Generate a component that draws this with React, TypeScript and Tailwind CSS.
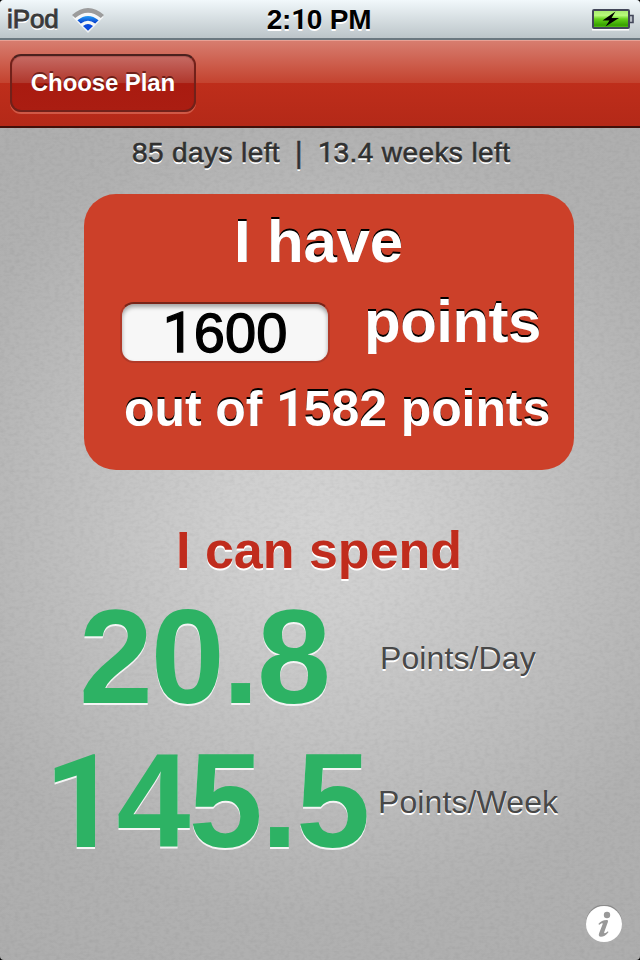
import React from "react";

// Straight-stemmed numeral one, set on the same advance as the other digits.
function One({ className = "" }: { className?: string }) {
  return <span className={`inline-block w-[0.556em] font-[Roboto,sans-serif] leading-none ${className}`}>1</span>;
}

function StatusBar() {
  return (
    <div className="flex h-10 items-center justify-between border-b-2 border-[#6b7880] bg-linear-to-b from-[#f1f8fb] to-[#bcc5c9] pl-[7px] pr-[6px]">
      <div className="flex w-[240px] items-center">
        <span className="w-[65px] text-[26px] leading-[38px] tracking-[-0.1px] text-[#393939] [-webkit-text-stroke:0.9px_#393939] [text-shadow:0_2px_0_#fff]">
          iPod
        </span>
        <svg width="32" height="25" viewBox="0 0 32 25" className="mt-[3px]">
          <defs>
            <linearGradient id="wifi" x1="0" y1="0" x2="0" y2="1">
              <stop offset="0" stopColor="#249cf5" />
              <stop offset="1" stopColor="#0737c8" />
            </linearGradient>
          </defs>
          <path d="M16 25 L0.5 9 Q16 -4 31.5 9 Z" fill="#fff" opacity="0.75" />
          <path d="M0 7 Q16 -7 32 7 L28.8 10 Q16 -0.5 3.2 10 Z" fill="#9c9c9c" />
          <path d="M5.4 12.3 Q16 3.6 26.6 12.3 L23.2 15.6 Q16 9.8 8.8 15.6 Z" fill="url(#wifi)" />
          <path d="M11 18 Q16 14 21 18 L16 22.8 Z" fill="#0a49db" />
        </svg>
      </div>
      <span className="mr-[3px] pt-px text-[28px] leading-[38px] font-bold tracking-[-0.2px] whitespace-nowrap text-black [text-shadow:0_2px_0_#fff]">
        2:<One />0 PM
      </span>
      <div className="flex w-[240px] justify-end">
        <svg width="43" height="22" viewBox="0 0 43 22" className="mt-0.5">
          <defs>
            <linearGradient id="cell" x1="0" y1="0" x2="0" y2="1">
              <stop offset="0" stopColor="#a5e96c" />
              <stop offset="0.3" stopColor="#b8fa7c" />
              <stop offset="0.5" stopColor="#65d21b" />
              <stop offset="0.85" stopColor="#36a000" />
              <stop offset="1" stopColor="#66cf25" />
            </linearGradient>
          </defs>
          <path d="M1 20.5H38" stroke="#fff" strokeWidth="2" />
          <rect x="2" y="1" width="36" height="18" rx="1" fill="url(#cell)" stroke="#424659" strokeWidth="2" />
          <path d="M39 6.5h3v7h-3" fill="#b7bdc5" stroke="#424659" strokeWidth="1.6" />
          <path d="M24.5 2.5 L11.5 11.5 H18.5 L14.5 17.5 L28 9 H20.5 Z" fill="#000" />
        </svg>
      </div>
    </div>
  );
}

function NavBar() {
  return (
    <div className="flex h-[88px] items-start border-t border-b-2 border-t-[#e8a195] border-b-[#42100a] bg-[linear-gradient(#d77d6f_0%,#c4432f_49%,#be2e1b_50%,#b42918_100%)] pt-[13px] pl-[10px]">
      <button className="h-[58px] w-[186px] rounded-[11px] border-2 border-[#71211a] border-t-[#4b211e] bg-[linear-gradient(#c66b64_0%,#b0372c_50%,#a91b10_51%,#aa1d12_100%)] pb-px text-[24px] leading-[52px] font-bold tracking-[-0.1px] whitespace-nowrap text-white shadow-[0_2px_0_rgba(225,120,100,0.6),inset_0_1px_1px_rgba(70,10,10,0.2)] [text-shadow:0_-2px_0_rgba(70,10,5,0.65)]">
        Choose Plan
      </button>
    </div>
  );
}

function BudgetCard() {
  return (
    <div className="mt-[18px] ml-[84px] h-[276px] w-[490px] rounded-[32px] bg-[#cc4029] pt-[18px] font-bold whitespace-nowrap text-white [text-shadow:0_-2px_0_#000]">
      <div className="pl-[150px] text-[60px] leading-[60px] tracking-[-0.2px]">I have</div>
      <div className="mt-5 flex h-[71px] items-start pl-[36px]">
        <div className="mt-[10px] h-[61px] w-[210px] rounded-[14px] border-2 border-[#b13a29] border-t-[#782418] bg-[#f7f7f7] text-center text-[56px] leading-[58px] font-normal text-black shadow-[inset_0_3px_4px_rgba(0,0,0,0.35)] [-webkit-text-stroke:1.3px_#000] [text-shadow:none]">
          <One />600
        </div>
        <div className="ml-[34px] text-[60px] leading-[60px] tracking-[-0.5px]">points</div>
      </div>
      <div className="mt-4 pl-[40px] text-[50px] leading-[60px] tracking-[-0.1px]">
        out of <One />582 points
      </div>
    </div>
  );
}

interface AmountProps {
  value: React.ReactNode;
  unit: string;
  valueClass: string;
  unitClass: string;
}

function Amount({ value, unit, valueClass, unitClass }: AmountProps) {
  return (
    <div className="flex h-36 items-center whitespace-nowrap">
      <div className={`shrink-0 text-[133px] leading-[142px] font-bold text-[#2db264] [text-shadow:0_2px_0_#f4f4f4] ${valueClass}`}>
        {value}
      </div>
      <div className={`pt-[2px] text-[32px] leading-[144px] tracking-[0.1px] text-[#484848] [text-shadow:0_2px_0_#fff] ${unitClass}`}>{unit}</div>
    </div>
  );
}

export default function App() {
  return (
    <div className="h-[960px] w-[640px] bg-black font-['Liberation_Sans',Arial,sans-serif]">
      <div className="relative h-full w-full overflow-hidden rounded-[4px] bg-[radial-gradient(circle_at_320px_520px,#d3d3d3_0px,#cfcfcf_90px,#bfbfbf_250px,#b1b1b1_400px,#acacac_600px)]">
        {/* Fine paper grain over the backdrop */}
        <svg className="absolute inset-0" width="640" height="960">
          <filter id="grain">
            <feTurbulence type="fractalNoise" baseFrequency="0.2 0.3" numOctaves="2" seed="4" />
            <feColorMatrix values="0 0 0 0 0  0 0 0 0 0  0 0 0 0 0  0.09 0 0 0 -0.035" />
          </filter>
          <rect width="640" height="960" filter="url(#grain)" />
        </svg>
        <div className="relative flex h-full flex-col">
          <StatusBar />
          <NavBar />
          <div className="flex h-12 items-center pt-px pl-[132px] text-[28px] tracking-[0.4px] whitespace-pre text-[#303030] [-webkit-text-stroke:0.6px_#303030] [text-shadow:0_2px_0_#fff]">
            <span className="w-[163px]">85 days left</span>
            <span className="w-[23px] text-[29px] leading-[44px]">|</span>
            <span>
              <One />3.4 weeks left
            </span>
          </div>
          <BudgetCard />
          <div className="mt-[50px] pl-[176px] text-[52px] leading-[60px] font-bold whitespace-nowrap text-[#c02c1d] [text-shadow:0_2px_0_#fff]">
            I can spend
          </div>
          <div className="mt-[5px]">
            <Amount value="20.8" unit="Points/Day" valueClass="w-[301px] pl-[79px] tracking-[-2.3px]" unitClass="pl-[79px]" />
            <Amount value={<><One className="text-[0.98em]" />45.5</>} unit="Points/Week" valueClass="w-[376px] pl-[44px] tracking-[-1.7px]" unitClass="pl-[2px]" />
          </div>
          <div className="mt-8 ml-[586px]">
            <svg width="36" height="37" viewBox="0 0 36 37">
              <circle cx="18" cy="17.5" r="18" fill="#8c8c8c" />
              <circle cx="18" cy="19" r="18" fill="#fff" />
              <circle cx="21" cy="10" r="3.2" fill="#999" />
              <path d="M12.5 18.8 C14.5 16.5 17.5 14.9 21 15 C22.2 15.1 22.2 16.2 21.8 17.3 L18.2 27.3 C17.8 28.8 19.5 28.4 22 26.2 L22.4 27.2 C20 30.2 17.5 31.8 15 31.8 C12.8 31.8 12.4 30.2 13.1 28.3 L16.6 19.2 C17.2 17.6 15.5 18 13 19.9 Z" fill="#999" />
            </svg>
          </div>
        </div>
      </div>
    </div>
  );
}
